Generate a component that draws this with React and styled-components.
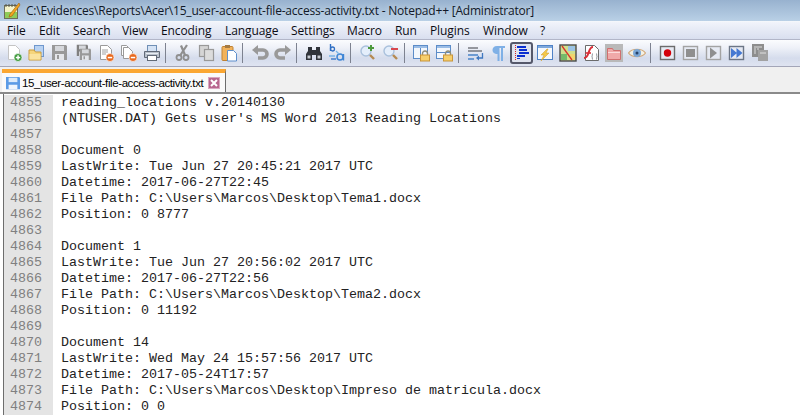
import React from 'react';
import styled, { createGlobalStyle } from 'styled-components';

const GlobalStyle = createGlobalStyle`
  html, body {
    margin: 0;
    padding: 0;
    background: #fff;
    overflow: hidden;
  }
`;

const Window = styled.div`
  width: 800px;
  height: 415px;
  display: flex;
  flex-direction: column;
  overflow: hidden;
`;

const TitleBar = styled.div`
  height: 21px;
  display: flex;
  align-items: center;
  gap: 5px;
  padding-left: 3px;
  background: linear-gradient(#98b2cf, #b9d0e6);
  border-bottom: 1px solid #f4f7fb;
  flex: none;
`;

const TitleText = styled.span`
  font-family: "Open Sans", "Liberation Sans", sans-serif;
  font-size: 12px;
  letter-spacing: -0.2px;
  color: #101828;
  text-shadow: 0 0 6px rgba(255, 255, 255, 0.6);
  white-space: nowrap;
`;

const MenuBar = styled.div`
  height: 17px;
  display: flex;
  align-items: center;
  background: linear-gradient(#f1f4fb, #d9dfef);
  flex: none;
`;

const MenuItem = styled.span`
  font-family: "Open Sans", "Liberation Sans", sans-serif;
  font-size: 12px;
  letter-spacing: -0.1px;
  color: #0c0c14;
  white-space: nowrap;
  width: ${(p) => p.$w}px;
  padding-left: ${(p) => p.$pad || 0}px;
`;

const ToolBar = styled.div`
  height: 26px;
  display: flex;
  align-items: center;
  padding-left: 2px;
  background: linear-gradient(#fbfcfe 0%, #eef1f8 30%, #d5dcec 70%, #dfe4f1 100%);
  border-top: 1px solid #b2b6c8;
  border-bottom: 1px solid #a3a6b8;
  flex: none;
`;

const ToolButton = styled.div`
  width: 23px;
  height: 22px;
  box-sizing: border-box;
  flex: none;
  display: flex;
  align-items: center;
  justify-content: center;
  border-radius: 3px;
  ${(p) => p.$active && `
    border: 2px solid #55586a;
    background: #dfe3ee;
  `}
  svg {
    display: block;
    flex: none;
  }
`;

const ToolSep = styled.div`
  width: 8px;
  height: 20px;
  flex: none;
  box-sizing: border-box;
  padding-left: 2px;
  &::before {
    content: '';
    display: block;
    width: 1px;
    height: 100%;
    background: #7d8290;
  }
`;

const TabBand = styled.div`
  height: 27px;
  box-sizing: border-box;
  padding: 2px 0 0 2px;
  display: flex;
  background: #f0f0f0;
  border-bottom: 2px solid #8a8a8a;
  flex: none;
`;

const Tab = styled.div`
  width: 224px;
  box-sizing: border-box;
  display: flex;
  align-items: center;
  padding: 0 5px 0 4px;
  gap: 2px;
  border-top: 4px solid #fba732;
  border-right: 1px solid #6d6d6d;
  background: #fafafa;
  svg {
    flex: none;
  }
`;

const TabLabel = styled.span`
  font-family: "Liberation Sans", Arial, sans-serif;
  font-size: 11.5px;
  letter-spacing: -0.4px;
  color: #000;
  white-space: nowrap;
  flex: 1;
`;

const Editor = styled.div`
  flex: 1;
  margin-left: 3px;
  border-left: 1px solid #6d6d6d;
  padding-top: 1px;
  background: #fff;
  font-family: "Liberation Mono", "Courier New", monospace;
  font-size: 13.33px;
  line-height: 16px;
`;

const Row = styled.div`
  display: flex;
  height: 16px;
`;

const LineNo = styled.div`
  width: 49px;
  box-sizing: border-box;
  padding-left: 6px;
  background: #e4e4e4;
  color: #808080;
  flex: none;
`;

const Code = styled.div`
  padding-left: 8px;
  color: #222;
  white-space: pre;
`;

const Doc = ({ x = 3, y = 1, w = 11, h = 14, fill = '#fff', stroke = '#9a9a9a' }) => (
  <path
    d={`M${x + .5} ${y + .5}h${w - 4}l4 4v${h - 5}h-${w}z`}
    fill={fill}
    stroke={stroke}
  />
);

const Floppy = ({ x = 0, y = 0, s = 1, c = '#999' }) => (
  <g transform={`translate(${x} ${y}) scale(${s})`}>
    <path d="M1 1h14l1 1v14H1z" fill={c} />
    <rect x="4" y="2" width="9" height="5" fill="#d6d8dc" />
    <rect x="4" y="10" width="9" height="6" fill="#e4e6ea" />
    <rect x="6" y="11" width="2" height="4" fill={c} />
  </g>
);

const Badge = ({ c, plus }) => (
  <g>
    <circle cx="13" cy="13.5" r="4" fill={c} stroke="#fff" strokeWidth=".6" />
    <rect x="10.8" y="12.8" width="4.4" height="1.5" fill="#fff" />
    {plus && <rect x="12.3" y="11.3" width="1.5" height="4.4" fill="#fff" />}
  </g>
);

const Lock = ({ x = 8, y = 8 }) => (
  <g transform={`translate(${x} ${y})`}>
    <path d="M2.5 4V2.5a2.5 2.5 0 0 1 5 0V4" fill="none" stroke="#8d8d7a" strokeWidth="1.4" />
    <rect x=".5" y="4" width="9" height="6" fill="#f6cf6b" stroke="#c9953a" />
  </g>
);

const Lens = ({ children }) => (
  <g>
    <circle cx="7" cy="7" r="5" fill="#e4eefb" stroke="#a9c0dc" strokeWidth="1.4" />
    <path d="M11 11l4 4" stroke="#b58a52" strokeWidth="2.4" />
    {children}
  </g>
);

const MacroBox = ({ c = '#8b8b8b', children }) => (
  <g>
    <rect x="1.5" y="2.5" width="14" height="13" fill="#e6eaf3" stroke={c} strokeWidth="1.4" />
    {children}
  </g>
);

const icons = {
  fileNew: <><Doc x={3} w={11} h={15} stroke="#c4c4c4" /><Badge c="#3f9a3c" plus /></>,
  fileOpen: (
    <>
      <rect x="6.5" y="1.5" width="9" height="11" fill="#b8d2f2" stroke="#6e97cd" />
      <path d="M1 6h5l1.500 2H13v8H1z" fill="#f6d57c" stroke="#c99b3d" />
      <rect x="1.500" y="10" width="11" height="5.500" fill="#fbe39f" />
    </>
  ),
  save: <Floppy />,
  saveAll: <><Floppy x={2} y={0} s={.75} c="#808080" /><Floppy x={5} y={4} s={.75} c="#999" /></>,
  close: (
    <>
      <Doc x={3} w={11} h={15} />
      <path d="M5 6h6M5 8h6M5 10h4" stroke="#a0a0a0" />
      <Badge c="#e8691f" />
    </>
  ),
  closeAll: (
    <>
      <Doc x={1} y={1} w={9} h={11} />
      <Doc x={3} y={3} w={9} h={12} />
      <Badge c="#e8691f" />
    </>
  ),
  print: (
    <>
      <rect x="4.500" y="1.500" width="9" height="6" fill="#d5e3f5" stroke="#6f8fb5" />
      <path d="M1.500 7.500h15v6h-15z" fill="#b8c0cb" stroke="#616a78" />
      <rect x="4.500" y="11.500" width="9" height="5" fill="#fff" stroke="#616a78" />
      <rect x="3" y="9" width="12" height="1" fill="#e8edf3" />
    </>
  ),
  cut: (
    <>
      <path d="M13 1L6.500 11M7 1.500L11 11" stroke="#8f8f8f" strokeWidth="2.200" fill="none" />
      <circle cx="5" cy="13.500" r="2.500" fill="none" stroke="#8f8f8f" strokeWidth="1.800" />
      <circle cx="12" cy="13.500" r="2.500" fill="none" stroke="#8f8f8f" strokeWidth="1.800" />
    </>
  ),
  copy: (
    <>
      <rect x="2.500" y="1.500" width="9" height="11" fill="#d5d5d5" stroke="#999" strokeWidth="1.200" />
      <rect x="7.500" y="5.500" width="9" height="11" fill="#dcdcdc" stroke="#999" strokeWidth="1.200" />
    </>
  ),
  paste: (
    <>
      <rect x="2" y="2.500" width="11" height="14" rx="1" fill="#f1b25b" stroke="#bf8234" />
      <rect x="5" y="1" width="5" height="3" fill="#a57a42" />
      <path d="M7.500 6.500h6l3 3v7.500h-9z" fill="#fff" stroke="#5e8fcc" />
    </>
  ),
  undo: (
    <>
      <path d="M7 1L1 6l6 5z" fill="#999" />
      <path d="M6 6h6a3.500 3.500 0 0 1 0 8H7" fill="none" stroke="#999" strokeWidth="3.600" />
    </>
  ),
  redo: (
    <>
      <path d="M11 1l6 5-6 5z" fill="#999" />
      <path d="M12 6H6a3.500 3.500 0 0 0 0 8h5" fill="none" stroke="#999" strokeWidth="3.600" />
    </>
  ),
  find: (
    <>
      <path d="M3 3h4v3h4V3h4v4l2 3v6h-6v-5H7v5H1v-6l2-3z" fill="#30343a" />
      <rect x="2.500" y="11.500" width="3" height="3" fill="#c8ccd2" />
      <rect x="12.500" y="11.500" width="3" height="3" fill="#c8ccd2" />
    </>
  ),
  replace: (
    <>
      <path d="M2.500 0v7" stroke="#2f6fc4" strokeWidth="1.400" />
      <circle cx="4.500" cy="5" r="2" fill="none" stroke="#2f6fc4" strokeWidth="1.300" />
      <circle cx="12" cy="13" r="3" fill="none" stroke="#3f86d6" strokeWidth="1.500" />
      <path d="M15.500 10v6.500" stroke="#3f86d6" strokeWidth="1.400" />
      <path d="M8 7l3 3M1 12h6" stroke="#79b4e8" strokeWidth="1.300" />
      <path d="M3 15h5" stroke="#2f6fc4" strokeWidth="1.300" />
    </>
  ),
  zoomIn: (
    <Lens>
      <rect x="9" y="3" width="6" height="2" fill="#4d9a3c" />
      <rect x="11" y="1" width="2" height="6" fill="#4d9a3c" />
    </Lens>
  ),
  zoomOut: (
    <Lens>
      <rect x="9" y="4" width="7" height="2" fill="#d8484f" />
    </Lens>
  ),
  syncV: (
    <>
      <rect x=".5" y="1.500" width="14" height="13" fill="#f3f7fc" stroke="#5c8cc8" />
      <rect x="1" y="2" width="13" height="2" fill="#9bbde6" />
      <path d="M7.500 4v10" stroke="#5c8cc8" />
      <Lock x={7} y={7} />
    </>
  ),
  syncH: (
    <>
      <rect x=".5" y="1.500" width="14" height="13" fill="#f3f7fc" stroke="#5c8cc8" />
      <rect x="1" y="2" width="13" height="2" fill="#9bbde6" />
      <path d="M1 8.500h13" stroke="#5c8cc8" />
      <Lock x={7} y={7} />
    </>
  ),
  wrap: (
    <>
      <path d="M1 4h10M1 7h14" stroke="#3c3f45" strokeWidth="1.200" />
      <path d="M1 11h10" stroke="#6d9bd2" strokeWidth="2" />
      <path d="M1 15h6" stroke="#6d9bd2" strokeWidth="2" />
      <path d="M15.500 9v5H10" fill="none" stroke="#3f78c0" strokeWidth="1.300" />
      <path d="M12 11.500L9 14l3 2.500z" fill="#3f78c0" />
    </>
  ),
  para: <path d="M7 2h8v2h-2v13h-2V4H9.500v13h-2V10C4 10 2.500 8 2.500 6S4 2 7 2z" fill="#7fb0e6" />,
  indent: (
    <>
      <path d="M2.500 1v15" stroke="#d8232a" strokeDasharray="1 1" />
      <path d="M4 2h9v2H4zM6 5h8v2H6zM6 8h10v2H6zM4 11h8v2H4zM4 14h3v1H4z" fill="#0b2fd0" />
    </>
  ),
  bolt: (
    <>
      <rect x="1.500" y="1.500" width="15" height="14" fill="#f5f8fd" stroke="#4f82c6" />
      <rect x="2" y="2" width="14" height="2" fill="#7fa9dc" />
      <path d="M11 5L5 11h3l-3 6 8-8h-3l2-4z" fill="#f4c84a" stroke="#cf9a2a" strokeWidth=".5" />
    </>
  ),
  map: (
    <>
      <rect x="1" y="1" width="16" height="16" fill="#cfe08c" stroke="#4a4a4a" strokeWidth="1.400" />
      <rect x="9" y="2" width="7" height="5" fill="#9cc4e4" />
      <rect x="2" y="10" width="6" height="6" fill="#74bb6a" />
      <rect x="11" y="10" width="5" height="6" fill="#f1d56d" />
      <path d="M3 2l10 14" stroke="#d8352c" strokeWidth="1.300" />
    </>
  ),
  func: (
    <>
      <Doc x={3} w={13} h={16} stroke="#6b6b6b" />
      <path d="M11 3C8 3 7.500 6 6.500 9S4 14 2 14" fill="none" stroke="#d9303a" strokeWidth="2" />
      <path d="M3.500 9H9" stroke="#d9303a" strokeWidth="1.600" />
      <path d="M11 9.500c-1 0-.5 2-1 3 .5 1 0 3 1 3M14 9.500c1 0 .5 2 1 3-.5 1 0 3-1 3" fill="none" stroke="#808890" />
    </>
  ),
  folder: (
    <>
      <rect x="0" y="0" width="18" height="18" fill="#b9b9b9" />
      <path d="M2.500 4.500h5l1 2h7v9h-13z" fill="#f0a9a9" stroke="#cf6f6f" />
      <rect x="3" y="8" width="12" height="1" fill="#fbdcdc" />
    </>
  ),
  eye: (
    <>
      <path d="M0.500 9C4 4 14 4 17.500 9 14 14 4 14 .5 9z" fill="#f4f1e4" stroke="#d2a878" strokeWidth="1.200" />
      <circle cx="9" cy="9" r="4" fill="#7ba7d6" />
      <circle cx="9" cy="9" r="1.500" fill="#274268" />
    </>
  ),
  record: <MacroBox c="#6c6c6c"><circle cx="8.500" cy="9" r="3.700" fill="#d3000a" /></MacroBox>,
  stop: <MacroBox c="#a3a3a3"><rect x="4" y="5" width="9" height="8" fill="#8f8f8f" /></MacroBox>,
  play: <MacroBox c="#a3a3a3"><path d="M5 3.500L12 9l-7 5.500z" fill="#8f8f8f" /></MacroBox>,
  playMulti: (
    <MacroBox c="#6c7686">
      <path d="M3 4l6 5-6 5zM8.500 4l6 5-6 5z" fill="#4478d2" />
    </MacroBox>
  ),
  saveMacro: (
    <>
      <rect x="1" y="0" width="12" height="13" fill="#8d8d8d" />
      <rect x="7" y="6" width="10" height="11" fill="#a2a2a2" />
      <path d="M3 3h8M3 5h2M6 5h2M3 7h2M3 9h2M9 9h6" stroke="#e6e6e6" strokeWidth=".9" />
    </>
  ),
};

const toolbar = [
  'fileNew', 'fileOpen', 'save', 'saveAll', 'close', 'closeAll', 'print', '|',
  'cut', 'copy', 'paste', '|',
  'undo', 'redo', '|',
  'find', 'replace', '|',
  'zoomIn', 'zoomOut', '|',
  'syncV', 'syncH', '|',
  'wrap', 'para', 'indent', 'bolt', 'map', 'func', 'folder', 'eye', '|',
  'record', 'stop', 'play', 'playMulti', 'saveMacro',
];

const menus = [
  ['File', 32, 7], ['Edit', 34], ['Search', 49], ['View', 39], ['Encoding', 64],
  ['Language', 66], ['Settings', 56], ['Macro', 48], ['Run', 35], ['Plugins', 53],
  ['Window', 57], ['?', 20],
];

const lines = [
  'reading_locations v.20140130',
  "(NTUSER.DAT) Gets user's MS Word 2013 Reading Locations",
  '',
  'Document 0',
  'LastWrite: Tue Jun 27 20:45:21 2017 UTC',
  'Datetime: 2017-06-27T22:45',
  'File Path: C:\\Users\\Marcos\\Desktop\\Tema1.docx',
  'Position: 0 8777',
  '',
  'Document 1',
  'LastWrite: Tue Jun 27 20:56:02 2017 UTC',
  'Datetime: 2017-06-27T22:56',
  'File Path: C:\\Users\\Marcos\\Desktop\\Tema2.docx',
  'Position: 0 11192',
  '',
  'Document 14',
  'LastWrite: Wed May 24 15:57:56 2017 UTC',
  'Datetime: 2017-05-24T17:57',
  'File Path: C:\\Users\\Marcos\\Desktop\\Impreso de matricula.docx',
  'Position: 0 0',
];

const AppIcon = () => (
  <svg width="18" height="18" viewBox="0 0 18 18">
    <rect x="1.500" y="3.500" width="13" height="13" fill="#f5f3c9" stroke="#6d6d58" />
    <rect x="2" y="10" width="12" height="6" fill="#8fcb58" />
    <path d="M3 2v3M6 2v3M9 2v3M12 2v3" stroke="#55554a" />
    <path d="M16 1L7 12l-1 3 3-1L17 3z" fill="#f2a51f" stroke="#9c5e12" strokeWidth=".6" />
  </svg>
);

const TabClose = () => (
  <svg width="12" height="12" viewBox="0 0 12 12">
    <rect width="12" height="12" fill="#b8678f" />
    <rect x=".5" y=".5" width="11" height="11" fill="none" stroke="#d9a7c0" />
    <path d="M3 3l6 6M9 3l-6 6" stroke="#fff" strokeWidth="2" />
  </svg>
);

const TabSave = () => (
  <svg width="14" height="14" viewBox="0 0 16 16">
    <path d="M0 1h15l1 1v13H0z" fill="#5b9be6" />
    <rect x="3" y="2" width="10" height="5" fill="#dcebfb" />
    <rect x="3" y="10" width="10" height="5" fill="#eef5fd" />
  </svg>
);

export default function App() {
  return (
    <Window>
      <GlobalStyle />
      <TitleBar>
        <AppIcon />
        <TitleText>C:\Evidences\Reports\Acer\15_user-account-file-access-activity.txt - Notepad++ [Administrator]</TitleText>
      </TitleBar>
      <MenuBar>
        {menus.map(([name, w, pad]) => (
          <MenuItem key={name} $w={w} $pad={pad}>{name}</MenuItem>
        ))}
      </MenuBar>
      <ToolBar>
        {toolbar.map((name, i) =>
          name === '|' ? (
            <ToolSep key={i} />
          ) : (
            <ToolButton key={i} $active={name === 'indent'}>
              <svg width="18" height="18" viewBox="0 0 18 18">{icons[name]}</svg>
            </ToolButton>
          )
        )}
      </ToolBar>
      <TabBand>
        <Tab>
          <TabSave />
          <TabLabel>15_user-account-file-access-activity.txt</TabLabel>
          <TabClose />
        </Tab>
      </TabBand>
      <Editor>
        {lines.map((text, i) => (
          <Row key={i}>
            <LineNo>{4855 + i}</LineNo>
            <Code>{text}</Code>
          </Row>
        ))}
      </Editor>
    </Window>
  );
}
